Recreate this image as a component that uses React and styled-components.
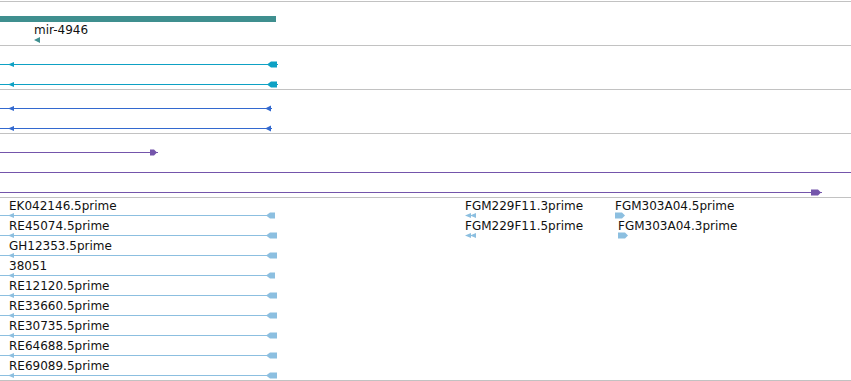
import React from 'react';
import styled, { createGlobalStyle } from 'styled-components';

const GlobalStyle = createGlobalStyle`
  html, body {
    margin: 0;
    padding: 0;
    background: #ffffff;
  }
  body {
    font-family: "DejaVu Sans", "Liberation Sans", sans-serif;
    overflow: hidden;
  }
`;

const TrackList = styled.div`
  width: 851px;
  margin-top: 1px;
  border-top: 1px solid #c2c2c2;
`;

const Track = styled.div`
  position: relative;
  box-sizing: border-box;
  height: ${props => props.$height}px;
  padding-top: ${props => props.$pad || 0}px;
  border-bottom: 1px solid #c2c2c2;
  overflow: hidden;
`;

const Row = styled.div`
  position: relative;
  height: 20px;
`;

const Feature = styled.div`
  position: absolute;
  top: 0;
  display: flex;
  flex-direction: column;
  padding-top: ${props => props.$pad || 0}px;
`;

const Label = styled.div`
  height: 14px;
  padding-left: ${props => props.$indent || 0}px;
  font-size: 12px;
  line-height: 14px;
  color: #111111;
  white-space: nowrap;
`;

const Bar = styled.div`
  height: 6px;
  margin-bottom: 1px;
  background: ${props => props.$color};
`;

const Glyph = styled.svg`
  display: block;
  overflow: visible;
  margin-top: ${props => props.$shift || 0}px;

  rect {
    shape-rendering: crispEdges;
  }
`;

const C = 3.5;

const leftTip = x => `${x},${C} ${x + 6},${C - 2.5} ${x + 6},${C + 2.5}`;
const leftCap = (x, end) => `${x},${C} ${x + 4},${C - 3} ${end},${C - 3} ${end},${C + 3} ${x + 4},${C + 3}`;
const rightCap = (x, end) => `${x},${C - 3} ${end - 3},${C - 3} ${end},${C} ${end - 3},${C + 3} ${x},${C + 3}`;

const LIGHT = '#8cbfe0';
const CYAN = '#0ea1c4';
const BLUE = '#3369cf';
const PURPLE = '#7455ab';
const TEAL = '#3f8f8f';

const lineFeature = (end, color, marks) => ({ left: 0, width: end, color, line: end, marks });

const track2 = [
  lineFeature(278, CYAN, [leftTip(8), leftCap(267, 277)]),
  lineFeature(278, CYAN, [leftTip(8), leftCap(267, 277)]),
];

const track3 = [
  lineFeature(272, BLUE, [leftTip(8), `265,${C} 271,${C - 3} 271,${C + 3}`]),
  lineFeature(272, BLUE, [leftTip(8), `265,${C} 271,${C - 3} 271,${C + 3}`]),
];

const track4 = [
  lineFeature(158, PURPLE, [rightCap(150, 157)]),
  lineFeature(851, PURPLE, []),
  lineFeature(822, PURPLE, [rightCap(811, 821)]),
];

const est = (name, end) => ({
  left: 0,
  width: end + 1,
  color: LIGHT,
  line: end,
  label: name,
  indent: 9,
  marks: [leftTip(8), leftCap(266, end)],
});

const smallLeft = (name, x) => ({
  left: x,
  width: 12,
  color: LIGHT,
  label: name,
  marks: [leftTip(0), leftTip(5)],
});

const smallRight = (name, x) => ({
  left: x,
  width: 12,
  color: LIGHT,
  label: name,
  marks: [rightCap(0, 10)],
});

const track5 = [
  [est('EK042146.5prime', 275), smallLeft('FGM229F11.3prime', 465), smallRight('FGM303A04.5prime', 615)],
  [est('RE45074.5prime', 277), smallLeft('FGM229F11.5prime', 465), smallRight('FGM303A04.3prime', 618)],
  [est('GH12353.5prime', 277)],
  [est('38051', 275)],
  [est('RE12120.5prime', 277)],
  [est('RE33660.5prime', 277)],
  [est('RE30735.5prime', 277)],
  [est('RE64688.5prime', 277)],
  [est('RE69089.5prime', 277)],
];

const FeatureGlyph = ({ f, shift }) => (
  <Glyph width={f.width} height="7" $shift={shift}>
    {f.line ? <rect x="0" y="3" width={f.line} height="1" fill={f.color} /> : null}
    {f.marks.map((pts, i) => (
      <polygon key={i} points={pts} fill={f.color} />
    ))}
  </Glyph>
);

const FeatureBox = ({ f }) => (
  <Feature style={{ left: f.left, width: f.width }} $pad={f.label ? 1 : 14}>
    {f.label ? <Label $indent={f.indent}>{f.label}</Label> : null}
    <FeatureGlyph f={f} shift={f.label ? -1 : 0} />
  </Feature>
);

const LineTrack = ({ height, rows }) => (
  <Track $height={height} $pad={1}>
    {rows.map((f, i) => (
      <Row key={i}>
        <FeatureBox f={f} />
      </Row>
    ))}
  </Track>
);

export default function App() {
  return (
    <>
      <GlobalStyle />
      <TrackList>
        <Track $height={44}>
          <Feature style={{ left: 0, width: 276 }} $pad={14}>
            <Bar $color={TEAL} />
            <Label $indent={34}>mir-4946</Label>
            <Glyph width="40" height="6" $shift={0}>
              <polygon points="34,3 40,0 40,6" fill={TEAL} />
            </Glyph>
          </Feature>
        </Track>
        <LineTrack height={44} rows={track2} />
        <LineTrack height={44} rows={track3} />
        <LineTrack height={64} rows={track4} />
        <Track $height={183}>
          {track5.map((row, i) => (
            <Row key={i}>
              {row.map((f, j) => (
                <FeatureBox key={j} f={f} />
              ))}
            </Row>
          ))}
        </Track>
      </TrackList>
    </>
  );
}
